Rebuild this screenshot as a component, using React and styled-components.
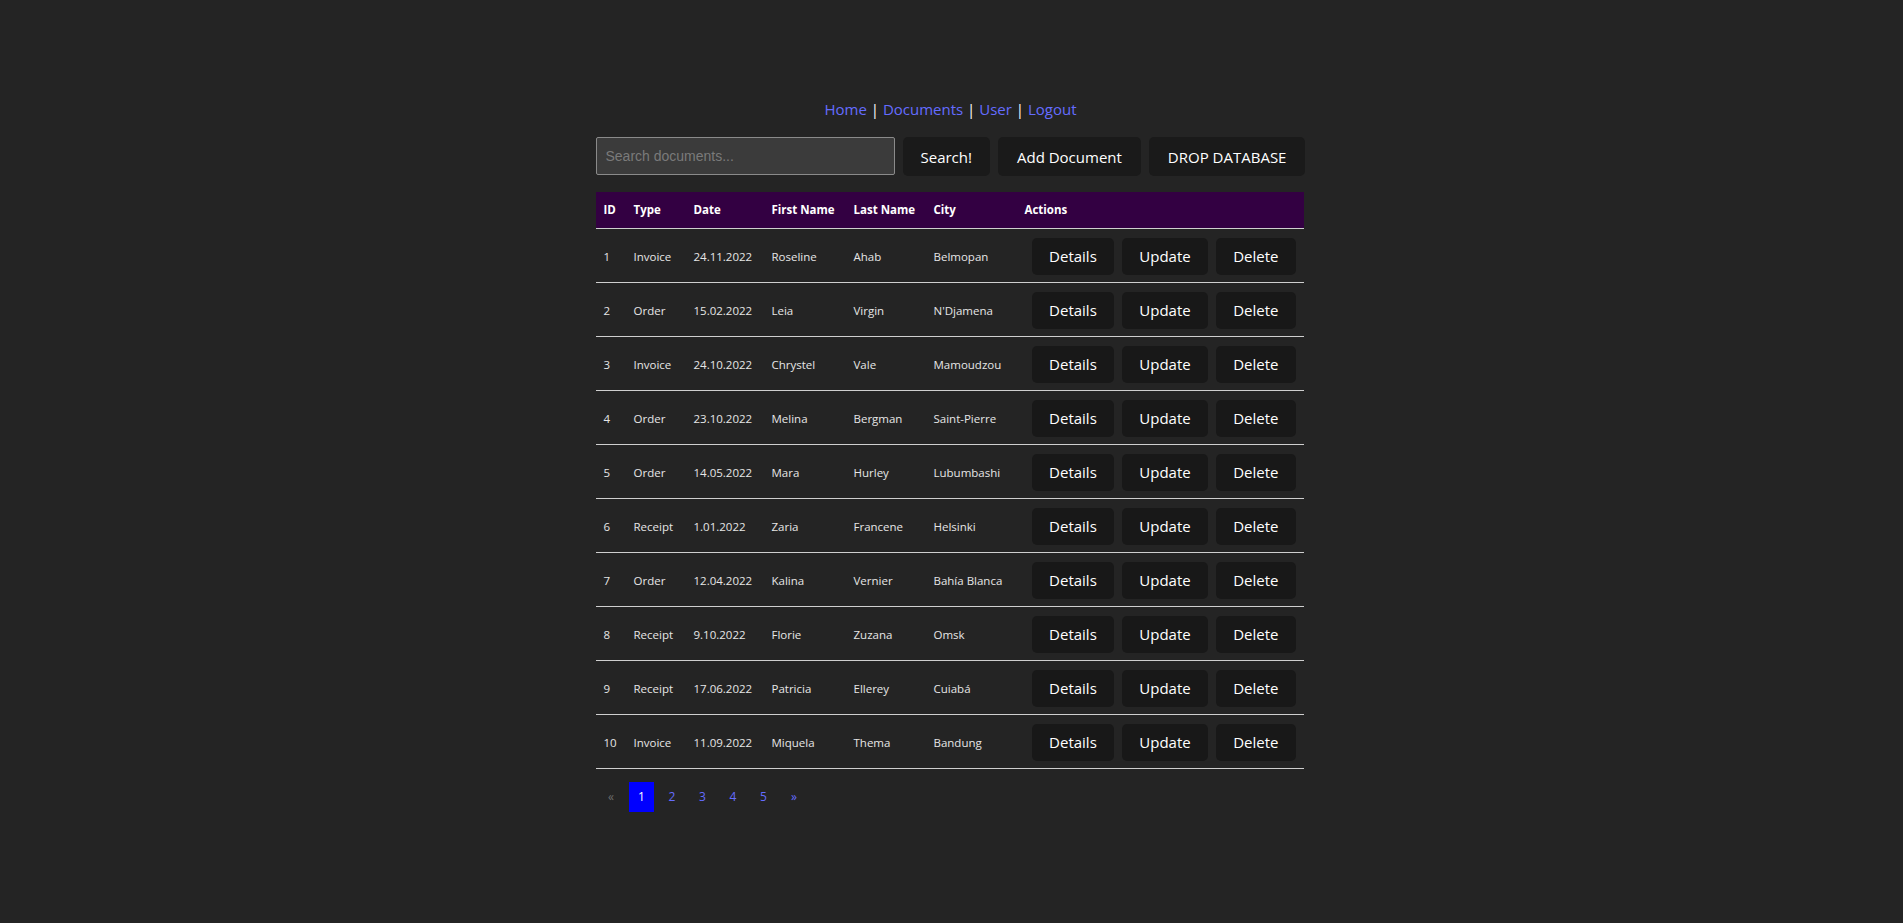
import React from 'react';
import styled, { createGlobalStyle } from 'styled-components';

const bgColor = '#242424';
const textColor = 'rgba(255, 255, 255, 0.87)';
const linkColor = '#646cff';
const buttonBg = '#1a1a1a';
const headerBg = '#330042';
const fontStack = '"Open Sans", "Noto Sans", sans-serif';

const GlobalStyle = createGlobalStyle`
  html, body {
    margin: 0;
    padding: 0;
    background: ${bgColor};
    color: ${textColor};
    font-family: ${fontStack};
    min-height: 100%;
  }
`;

const Page = styled.div`
  width: 712px;
  margin: 0 auto;
  padding-top: 97px;
`;

const Nav = styled.nav`
  width: 710px;
  text-align: center;
  font-size: 15px;
  line-height: 24px;
  color: #fff;
`;

const NavLink = styled.a`
  color: ${linkColor};
  font-weight: 500;
  text-decoration: none;
  cursor: pointer;
`;

const Toolbar = styled.div`
  display: flex;
  align-items: stretch;
  gap: 8px;
  margin-top: 16px;
  height: 39px;
`;

const SearchInput = styled.input`
  box-sizing: border-box;
  width: 299px;
  height: 38px;
  padding: 0 9px;
  background: #3b3b3b;
  border: 1px solid #8a8a8a;
  border-radius: 2px;
  color: #fff;
  font-family: "Liberation Sans", Arial, sans-serif;
  font-size: 14px;
  &::placeholder {
    color: #7a7a7a;
  }
`;

const Button = styled.button`
  box-sizing: border-box;
  height: ${p => (p.$small ? '37px' : '39px')};
  padding: 0 ${p => p.$pad || 17.5}px;
  background: ${p => (p.$small ? '#181818' : buttonBg)};
  color: #fff;
  border: none;
  border-radius: 5px;
  font-family: ${fontStack};
  font-size: 15px;
  font-weight: 400;
  cursor: pointer;
  white-space: nowrap;
`;

const Table = styled.table`
  width: 708px;
  margin-top: 16px;
  border-collapse: collapse;
  table-layout: fixed;
`;

const Th = styled.th`
  height: 36px;
  padding: 0 8px;
  background: ${headerBg};
  color: #fff;
  font-size: 11.5px;
  font-weight: 700;
  text-align: left;
  white-space: nowrap;
  border-bottom: 1px solid #cfcfcf;
  box-sizing: border-box;
`;

const Td = styled.td`
  height: 54px;
  padding: 2px 8px 0;
  font-size: 11.5px;
  color: #e6e6e6;
  border-bottom: 1px solid #cfcfcf;
  box-sizing: border-box;
  white-space: nowrap;
`;

const Actions = styled.div`
  display: flex;
  justify-content: flex-end;
  gap: 8px;
`;

const Pagination = styled.ul`
  list-style: none;
  display: flex;
  gap: 5.5px;
  margin: 13px 0 0;
  padding: 0 0 0 3px;
`;

const PageItem = styled.li`
  width: 25px;
  height: 30px;
  display: flex;
  align-items: center;
  justify-content: center;
  font-size: 12px;
  color: ${p => (p.$active ? '#fff' : p.$disabled ? '#6c6c6c' : linkColor)};
  background: ${p => (p.$active ? '#0000ff' : 'transparent')};
  cursor: pointer;
`;

const columns = [
  ['ID', 30],
  ['Type', 60],
  ['Date', 78],
  ['First Name', 82],
  ['Last Name', 80],
  ['City', 91],
  ['Actions', 287],
];

const documents = [
  [1, 'Invoice', '24.11.2022', 'Roseline', 'Ahab', 'Belmopan'],
  [2, 'Order', '15.02.2022', 'Leia', 'Virgin', "N'Djamena"],
  [3, 'Invoice', '24.10.2022', 'Chrystel', 'Vale', 'Mamoudzou'],
  [4, 'Order', '23.10.2022', 'Melina', 'Bergman', 'Saint-Pierre'],
  [5, 'Order', '14.05.2022', 'Mara', 'Hurley', 'Lubumbashi'],
  [6, 'Receipt', '1.01.2022', 'Zaria', 'Francene', 'Helsinki'],
  [7, 'Order', '12.04.2022', 'Kalina', 'Vernier', 'Bahía Blanca'],
  [8, 'Receipt', '9.10.2022', 'Florie', 'Zuzana', 'Omsk'],
  [9, 'Receipt', '17.06.2022', 'Patricia', 'Ellerey', 'Cuiabá'],
  [10, 'Invoice', '11.09.2022', 'Miquela', 'Thema', 'Bandung'],
];

export default function App() {
  return (
    <>
      <GlobalStyle />
      <Page>
        <Nav>
          <NavLink>Home</NavLink> | <NavLink>Documents</NavLink> | <NavLink>User</NavLink> | <NavLink>Logout</NavLink>
        </Nav>
        <Toolbar>
          <SearchInput placeholder="Search documents..." />
          <Button $pad={18}>Search!</Button>
          <Button $pad={19}>Add Document</Button>
          <Button $pad={19}>DROP DATABASE</Button>
        </Toolbar>
        <Table>
          <colgroup>
            {columns.map(([name, w]) => (
              <col key={name} style={{ width: w }} />
            ))}
          </colgroup>
          <thead>
            <tr>
              {columns.map(([name]) => (
                <Th key={name}>{name}</Th>
              ))}
            </tr>
          </thead>
          <tbody>
            {documents.map(row => (
              <tr key={row[0]}>
                {row.map((cell, i) => (
                  <Td key={i}>{cell}</Td>
                ))}
                <Td>
                  <Actions>
                    <Button $small $pad={17}>Details</Button>
                    <Button $small $pad={17.5}>Update</Button>
                    <Button $small $pad={17}>Delete</Button>
                  </Actions>
                </Td>
              </tr>
            ))}
          </tbody>
        </Table>
        <Pagination>
          <PageItem $disabled>«</PageItem>
          <PageItem $active>1</PageItem>
          <PageItem>2</PageItem>
          <PageItem>3</PageItem>
          <PageItem>4</PageItem>
          <PageItem>5</PageItem>
          <PageItem>»</PageItem>
        </Pagination>
      </Page>
    </>
  );
}
